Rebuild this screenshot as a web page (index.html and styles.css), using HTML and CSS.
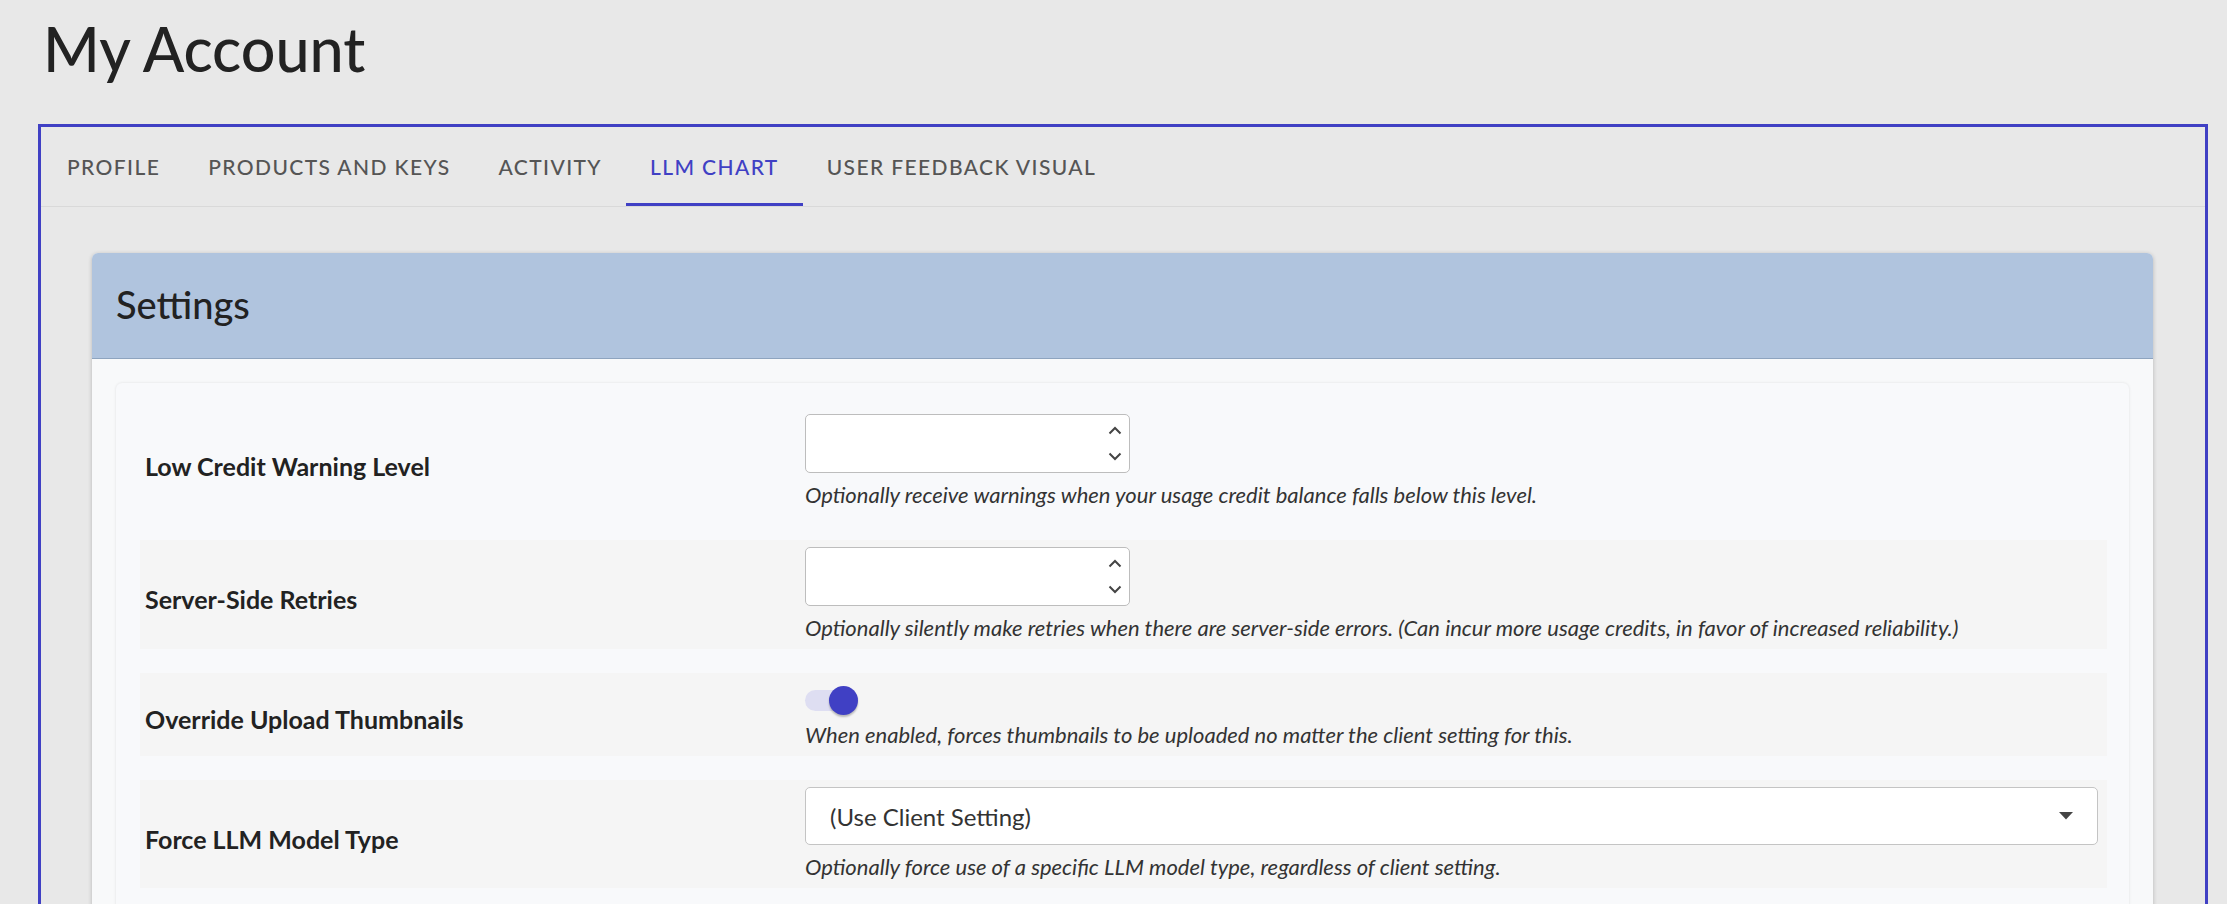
FILE: index.html
```html
<!DOCTYPE html>
<html lang="en">
<head>
  <meta charset="UTF-8" />
  <meta name="viewport" content="width=device-width, initial-scale=1" />
  <title>My Account</title>
  <link rel="stylesheet" href="styles.css">
</head>
<body>
  <div class="pagina">
    <h1 class="titulo">My Account</h1>

    <div class="marco">
      <!-- Pestañas -->
      <nav class="pestanas">
        <a class="pestana">Profile</a>
        <a class="pestana">Products and Keys</a>
        <a class="pestana">Activity</a>
        <a class="pestana activa">LLM Chart</a>
        <a class="pestana">User Feedback Visual</a>
      </nav>

      <div class="contenido">
        <div class="tarjeta">
          <div class="tarjeta-cabecera">
            <h2>Settings</h2>
          </div>

          <div class="tarjeta-cuerpo">
            <div class="panel">

              <div class="fila">
                <label class="fila-label">Low Credit Warning Level</label>
                <div class="fila-control">
                  <div class="campo-numero">
                    <input type="text" value="" />
                    <span class="flechas">
                      <svg width="14" height="9" viewBox="0 0 14 9"><path d="M1.5 7.5 L7 2 L12.5 7.5" fill="none" stroke="#444" stroke-width="2"/></svg>
                      <svg width="14" height="9" viewBox="0 0 14 9"><path d="M1.5 1.5 L7 7 L12.5 1.5" fill="none" stroke="#444" stroke-width="2"/></svg>
                    </span>
                  </div>
                  <p class="ayuda">Optionally receive warnings when your usage credit balance falls below this level.</p>
                </div>
              </div>

              <div class="fila rayada">
                <label class="fila-label">Server-Side Retries</label>
                <div class="fila-control">
                  <div class="campo-numero">
                    <input type="text" value="" />
                    <span class="flechas">
                      <svg width="14" height="9" viewBox="0 0 14 9"><path d="M1.5 7.5 L7 2 L12.5 7.5" fill="none" stroke="#444" stroke-width="2"/></svg>
                      <svg width="14" height="9" viewBox="0 0 14 9"><path d="M1.5 1.5 L7 7 L12.5 1.5" fill="none" stroke="#444" stroke-width="2"/></svg>
                    </span>
                  </div>
                  <p class="ayuda">Optionally silently make retries when there are server-side errors. (Can incur more usage credits, in favor of increased reliability.)</p>
                </div>
              </div>

              <div class="fila rayada">
                <label class="fila-label">Override Upload Thumbnails</label>
                <div class="fila-control">
                  <div class="interruptor-caja">
                    <span class="interruptor">
                      <span class="pista"></span>
                      <span class="bolita"></span>
                    </span>
                  </div>
                  <p class="ayuda sin-margen">When enabled, forces thumbnails to be uploaded no matter the client setting for this.</p>
                </div>
              </div>

              <div class="fila rayada">
                <label class="fila-label">Force LLM Model Type</label>
                <div class="fila-control">
                  <div class="selector">
                    <span>(Use Client Setting)</span>
                    <svg width="14" height="8" viewBox="0 0 14 8"><path d="M0 0 H14 L7 7.5 Z" fill="#444"/></svg>
                  </div>
                  <p class="ayuda">Optionally force use of a specific LLM model type, regardless of client setting.</p>
                </div>
              </div>

            </div>
          </div>
        </div>
      </div>
    </div>
  </div>
</body>
</html>
```

FILE: styles.css
```css
:root {
  --color-primario: #4040c4;
  --color-fondo: #e8e8e8;
  --color-cabecera: #b0c4de;
  --color-texto: #222;
  --color-ayuda: #333;
}

* {
  margin: 0;
  padding: 0;
  box-sizing: border-box;
}

body {
  font-family: 'Lato', 'Noto Sans', sans-serif;
  background: var(--color-fondo);
  color: var(--color-texto);
  overflow: hidden;
}

.pagina {
  padding: 12px 19px 0 38px;
}

.titulo {
  font-size: 61px;
  font-weight: 500;
  line-height: 1.2;
  padding-left: 5px;
  margin-bottom: 39px;
}

/* Marco con borde azul */
.marco {
  border: 3px solid var(--color-primario);
  min-height: 900px;
}

.pestanas {
  display: flex;
  height: 80px;
  border-bottom: 1px solid #d9d9d9;
}

.pestana {
  display: flex;
  align-items: center;
  padding: 3px 24px 0;
  font-size: 21px;
  font-weight: 500;
  letter-spacing: 1.4px;
  text-transform: uppercase;
  color: #555;
  border-bottom: 3px solid transparent;
  cursor: pointer;
}

.pestana:first-child {
  margin-left: 2px;
}

.pestana.activa {
  color: var(--color-primario);
  border-bottom-color: var(--color-primario);
}

.contenido {
  padding: 46px 52px 0 51px;
}

/* Tarjeta de ajustes */
.tarjeta {
  border-radius: 6px;
  background: #f8f9fa;
  box-shadow: 0 1px 4px rgba(0, 0, 0, 0.22);
}

.tarjeta-cabecera {
  height: 106px;
  display: flex;
  align-items: center;
  padding: 0 24px 4px;
  background: var(--color-cabecera);
  border-bottom: 1px solid #8ea4bf;
  border-radius: 6px 6px 0 0;
}

.tarjeta-cabecera h2 {
  font-size: 38px;
  font-weight: 500;
}

.tarjeta-cuerpo {
  padding: 24px;
}

.panel {
  display: flex;
  flex-direction: column;
  gap: 24px;
  padding: 24px 22px 24px 24px;
  background: #f8f9fb;
  border-radius: 6px;
  box-shadow: 0 0 3px rgba(0, 0, 0, 0.1);
}

.fila {
  display: grid;
  grid-template-columns: 660px 1fr;
  align-items: center;
  padding: 7px 9px 7px 5px;
}

.fila.rayada {
  background: #f5f5f5;
}

.fila-label {
  font-size: 25px;
  font-weight: 700;
  padding-top: 9px;
}

.fila-control {
  display: flex;
  flex-direction: column;
}

.ayuda {
  margin-top: 8px;
  font-size: 22px;
  font-style: italic;
  line-height: 28px;
  color: var(--color-ayuda);
}

.ayuda.sin-margen {
  margin-top: 0;
}

/* Campo numérico */
.campo-numero {
  display: flex;
  width: 325px;
  height: 59px;
  background: #fff;
  border: 1px solid #bdbdbd;
  border-radius: 5px;
}

.campo-numero input {
  flex: 1;
  min-width: 0;
  border: none;
  outline: none;
  background: transparent;
  font: inherit;
  font-size: 22px;
  padding: 0 16px;
}

.flechas {
  display: flex;
  flex-direction: column;
  justify-content: space-between;
  padding: 11px 7px 11px 0;
}

/* Interruptor */
.interruptor-caja {
  height: 41px;
  display: flex;
  align-items: center;
}

.interruptor {
  position: relative;
  width: 56px;
  height: 30px;
}

.pista {
  position: absolute;
  left: 0;
  top: 4px;
  width: 51px;
  height: 21px;
  border-radius: 11px;
  background: #dedef2;
}

.bolita {
  position: absolute;
  left: 24px;
  top: 0;
  width: 29px;
  height: 29px;
  border-radius: 50%;
  background: var(--color-primario);
  box-shadow: 0 2px 2px rgba(0, 0, 0, 0.25);
}

/* Selector */
.selector {
  display: flex;
  align-items: center;
  justify-content: space-between;
  height: 58px;
  padding: 0 24px 0 24px;
  background: #fff;
  border: 1px solid #c4c4c4;
  border-radius: 5px;
  font-size: 24px;
  color: #333;
}
```
